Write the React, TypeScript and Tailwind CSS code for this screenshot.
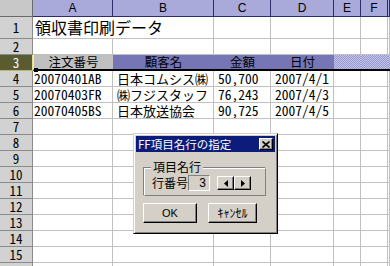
import React from "react";

const jp = "font-['Noto_Sans_CJK_JP',sans-serif]";
const mono = "font-['Noto_Sans_Mono_CJK_JP','DejaVu_Sans_Mono',monospace]";

const colHead =
  "bg-[#a9a9da] border-r border-b border-[#2c2c6c] text-center text-[12px] leading-[16px] text-black font-['Liberation_Sans',sans-serif]";
const rowHead =
  "bg-[#d2d2d2] border-r border-b border-[#8a8a8a] text-center text-[13px] leading-[15px] text-black " +
  mono;
const cell = "border-r border-b border-[#c0c0c0] overflow-hidden whitespace-nowrap";

const data = [
  { n: 4, a: "20070401AB", b: "日本コムシス㈱", c: "50,700", d: "2007/4/1" },
  { n: 5, a: "20070403FR", b: "㈱フジスタッフ", c: "76,243", d: "2007/4/3" },
  { n: 6, a: "20070405BS", b: "日本放送協会", c: "90,725", d: "2007/4/5" },
];

const empty = [7, 8, 9, 10, 11, 12, 13, 14, 15, 16];

function RaisedBtn({ children, className }: { children: React.ReactNode; className: string }) {
  return (
    <div
      className={
        "bg-[#d4d0c8] border border-t-white border-l-white border-r-black border-b-black shadow-[inset_-1px_-1px_0_#808080] flex items-center justify-center " +
        className
      }
    >
      {children}
    </div>
  );
}

export default function App() {
  return (
    <div className="relative w-[390px] h-[266px] overflow-hidden bg-white">
      <div className="grid grid-cols-[33px_80px_101px_57px_63px_27px_27px_1fr] grid-rows-[17px_22px_repeat(15,16px)]">
        {/* header row */}
        <div className="bg-[#c8c8c8] border-r border-b border-[#6a6a6a]" />
        <div className={colHead}>A</div>
        <div className={colHead}>B</div>
        <div className={colHead}>C</div>
        <div className={colHead}>D</div>
        <div className={colHead}>E</div>
        <div className={colHead}>F</div>
        <div className={colHead}></div>

        {/* row 1 */}
        <div className={rowHead + " leading-[21px]"}>1</div>
        <div className={cell + " col-span-2 pl-[2px] text-[16px] leading-[21px] text-black " + jp}>
          領収書印刷データ
        </div>
        <div className={cell} />
        <div className={cell} />
        <div className={cell} />
        <div className={cell} />
        <div className={cell} />

        {/* row 2 */}
        <div className={rowHead}>2</div>
        <div className={cell} />
        <div className={cell} />
        <div className={cell} />
        <div className={cell} />
        <div className={cell} />
        <div className={cell} />
        <div className={cell} />

        {/* row 3 */}
        <div className={"bg-[#5b5b32] border-r border-b border-r-[#e2e292] border-b-[#b8b870] text-center text-[13px] leading-[15px] text-white " + mono}>
          3
        </div>
        <div className={"relative bg-[#c0c0c0] border-b-2 border-b-black border-l border-l-[#e8e8e8] text-center text-[12.5px] leading-[14px] text-black whitespace-nowrap " + jp}>
          注文番号
          <div className="absolute left-0 bottom-[-3px] w-[4px] h-[4px] bg-black" />
        </div>
        <div className={"bg-[#7676b6] border-b-2 border-b-black text-center text-[12.5px] leading-[14px] text-black whitespace-nowrap " + jp}>
          顧客名
        </div>
        <div className={"bg-[#7676b6] border-b-2 border-b-black text-center text-[12.5px] leading-[14px] text-black whitespace-nowrap " + jp}>
          金額
        </div>
        <div className={"bg-[#7676b6] border-b-2 border-b-black text-center text-[12.5px] leading-[14px] text-black whitespace-nowrap " + jp}>
          日付
        </div>
        <div className="border-b-2 border-b-black bg-[repeating-conic-gradient(#9a9ad2_0_25%,#c2c2e6_0_50%)] bg-[length:2px_2px]" />
        <div className="border-b-2 border-b-black bg-[repeating-conic-gradient(#9a9ad2_0_25%,#c2c2e6_0_50%)] bg-[length:2px_2px]" />
        <div className="border-b-2 border-b-black bg-[repeating-conic-gradient(#9a9ad2_0_25%,#c2c2e6_0_50%)] bg-[length:2px_2px]" />

        {/* data rows */}
        {data.map((r) => (
          <React.Fragment key={r.n}>
            <div className={rowHead}>{r.n}</div>
            <div className={cell + " pl-[1px] text-[13.5px] leading-[15px] text-black " + mono}>{r.a}</div>
            <div className={cell + " pl-[4px] text-[13px] leading-[15px] text-black " + jp}>{r.b}</div>
            <div className={cell + " pl-[4px] text-[13.5px] leading-[15px] text-black " + mono}>{r.c}</div>
            <div className={cell + " pl-[4px] text-[13.5px] leading-[15px] text-black " + mono}>{r.d}</div>
            <div className={cell} />
            <div className={cell} />
            <div className={cell} />
          </React.Fragment>
        ))}

        {/* empty rows */}
        {empty.map((n) => (
          <React.Fragment key={n}>
            <div className={rowHead}>{n}</div>
            <div className={cell} />
            <div className={cell} />
            <div className={cell} />
            <div className={cell} />
            <div className={cell} />
            <div className={cell} />
            <div className={cell} />
          </React.Fragment>
        ))}
      </div>

      {/* dialog */}
      <div
        className={
          "absolute left-[133px] top-[133px] w-[145px] h-[101px] bg-[#d4d0c8] border border-t-[#d4d0c8] border-l-[#d4d0c8] border-r-black border-b-black shadow-[inset_1px_1px_0_#ffffff,inset_-1px_-1px_0_#808080] p-[2px] flex flex-col text-black " +
          jp
        }
      >
        <div className="h-[16px] bg-[#0c1c7a] flex items-center justify-between pl-[2px] pr-[2px]">
          <span className="text-white text-[11.5px] leading-[14px] whitespace-nowrap">FF項目名行の指定</span>
          <RaisedBtn className="w-[14px] h-[12px]">
            <svg width="8" height="7" viewBox="0 0 8 7">
              <path d="M0.5 0.5 L7.5 6.5 M7.5 0.5 L0.5 6.5" stroke="black" strokeWidth="1.6" />
            </svg>
          </RaisedBtn>
        </div>

        <div className="flex-1 flex flex-col pl-[7px] pr-[9px] pt-[15px]">
          <div className="relative h-[29px] border border-t-[#808080] border-l-[#808080] border-r-white border-b-white shadow-[inset_1px_1px_0_#ffffff,1px_1px_0_#808080_inset]">
            <div className="absolute inset-0 border border-t-white border-l-white border-r-[#808080] border-b-[#808080] -m-px ml-0 mt-0 pointer-events-none" />
            <div className="absolute left-[7px] top-[-8px] px-[2px] bg-[#d4d0c8] text-[12px] leading-[14px] whitespace-nowrap">
              項目名行
            </div>
            <div className="flex items-center h-full pl-[8px] pt-[3px]">
              <span className="text-[12px] leading-[14px] whitespace-nowrap">行番号</span>
              <div className="w-[22px] h-[16px] border border-t-[#808080] border-l-[#808080] border-r-white border-b-white bg-[#d4d0c8] text-right pr-[3px] text-[12px] leading-[14px] font-['Liberation_Sans',sans-serif]">
                3
              </div>
              <div className="ml-[7px] flex">
                <RaisedBtn className="w-[17px] h-[14px]">
                  <svg width="4" height="7" viewBox="0 0 4 7">
                    <path d="M4 0 L0 3.5 L4 7 Z" fill="black" />
                  </svg>
                </RaisedBtn>
                <RaisedBtn className="w-[17px] h-[14px]">
                  <svg width="4" height="7" viewBox="0 0 4 7">
                    <path d="M0 0 L4 3.5 L0 7 Z" fill="black" />
                  </svg>
                </RaisedBtn>
              </div>
            </div>
          </div>

          <div className="flex mt-[7px] gap-[11px]">
            <RaisedBtn className="w-[54px] h-[20px]">
              <span className="text-[11px] leading-[12px] font-['Liberation_Sans',sans-serif]">OK</span>
            </RaisedBtn>
            <RaisedBtn className="w-[49px] h-[20px]">
              <span className="text-[12px] leading-[12px] whitespace-nowrap">ｷｬﾝｾﾙ</span>
            </RaisedBtn>
          </div>
        </div>
      </div>
    </div>
  );
}
